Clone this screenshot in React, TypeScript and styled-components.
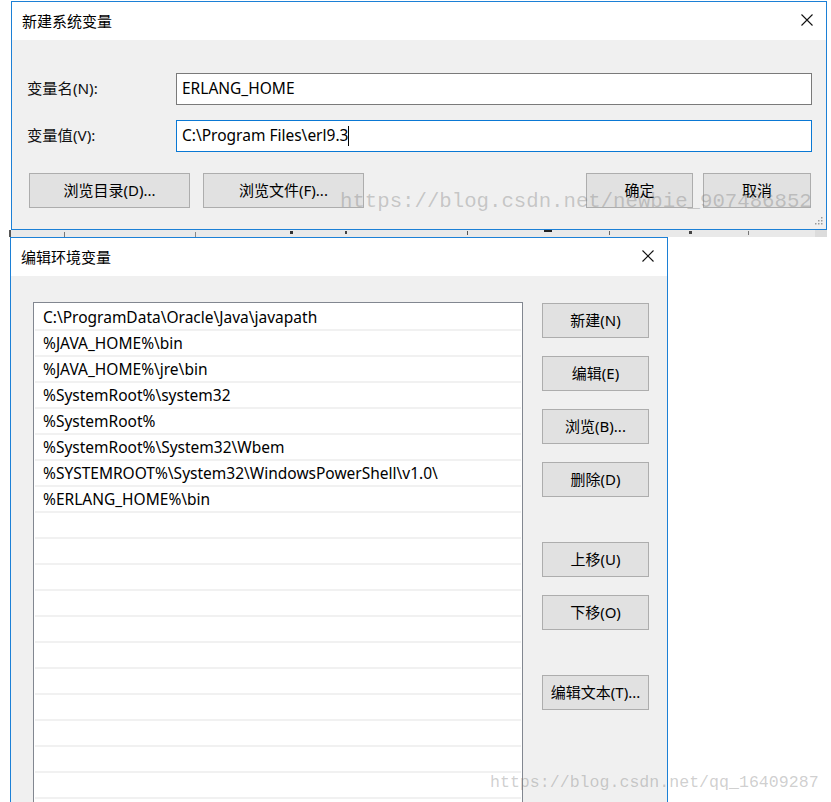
import styled, { createGlobalStyle } from "styled-components";

const GlobalStyle = createGlobalStyle`
  html, body {
    margin: 0;
    padding: 0;
    background: #fff;
    overflow: hidden;
  }
  body {
    font-family: "Noto Sans", "Noto Sans CJK SC", sans-serif;
    font-size: 15px;
    color: #000;
  }
  * {
    box-sizing: border-box;
  }
`;

const paths = [
  "C:\\ProgramData\\Oracle\\Java\\javapath",
  "%JAVA_HOME%\\bin",
  "%JAVA_HOME%\\jre\\bin",
  "%SystemRoot%\\system32",
  "%SystemRoot%",
  "%SystemRoot%\\System32\\Wbem",
  "%SYSTEMROOT%\\System32\\WindowsPowerShell\\v1.0\\",
  "%ERLANG_HOME%\\bin",
];

const CloseIcon = () => (
  <svg width="12" height="12" viewBox="0 0 12 12">
    <path d="M0.5 0.5 L11.5 11.5 M11.5 0.5 L0.5 11.5" stroke="#111" strokeWidth="1.1" fill="none" />
  </svg>
);

const Grip = () => (
  <svg width="10" height="10" viewBox="0 0 10 10">
    <g fill="#9a9a9a">
      <rect x="8" y="1" width="1.5" height="1.5" />
      <rect x="5" y="4" width="1.5" height="1.5" />
      <rect x="8" y="4" width="1.5" height="1.5" />
      <rect x="2" y="7" width="1.5" height="1.5" />
      <rect x="5" y="7" width="1.5" height="1.5" />
      <rect x="8" y="7" width="1.5" height="1.5" />
    </g>
  </svg>
);

// fragment of the window behind, visible between the two dialogs
const BehindStrip = () => (
  <svg width="818" height="7" viewBox="0 0 818 7">
    <rect x="0" y="0" width="818" height="7" fill="#e9e9e9" />
    <rect x="0" y="0" width="2" height="7" fill="#555" />
    <rect x="55" y="2" width="1" height="5" fill="#777" />
    <rect x="186" y="2" width="1" height="5" fill="#888" />
    <rect x="281" y="1" width="3" height="3" fill="#333" />
    <rect x="336" y="1" width="2" height="3" fill="#444" />
    <rect x="458" y="1" width="1" height="4" fill="#555" />
    <rect x="535" y="0" width="8" height="2" fill="#222" />
    <rect x="600" y="1" width="1" height="4" fill="#666" />
    <rect x="680" y="1" width="3" height="3" fill="#444" />
    <rect x="739" y="1" width="1" height="4" fill="#777" />
    <rect x="806" y="0" width="12" height="7" fill="#dcdcdc" />
  </svg>
);

export default function App() {
  return (
    <Page>
      <GlobalStyle />

      <Dialog $left={11} $width={816}>
        <TitleBar>
          <Title>新建系统变量</Title>
          <CloseIcon />
        </TitleBar>
        <VarForm>
          <FieldGrid>
            <Label>变量名(N):</Label>
            <Input>ERLANG_HOME</Input>
            <Label>变量值(V):</Label>
            <Input $focused>
              C:\Program Files\erl9.3
              <Caret />
            </Input>
          </FieldGrid>
          <ButtonRow>
            <ButtonGroup $gap={13}>
              <Button $width={161}>浏览目录(D)...</Button>
              <Button $width={161}>浏览文件(F)...</Button>
            </ButtonGroup>
            <ButtonGroup $gap={10}>
              <Button $width={107}>确定</Button>
              <Button $width={108}>取消</Button>
            </ButtonGroup>
          </ButtonRow>
          <GripSpot>
            <Grip />
          </GripSpot>
        </VarForm>
      </Dialog>

      <StripRow>
        <BehindStrip />
      </StripRow>

      <Dialog $left={10} $width={658}>
        <TitleBar>
          <Title>编辑环境变量</Title>
          <CloseIcon />
        </TitleBar>
        <EditBody>
          <PathList>
            {Array.from({ length: 20 }).map((_, i) => (
              <PathRow key={i}>{paths[i] ?? ""}</PathRow>
            ))}
          </PathList>
          <SideButtons>
            <Button $width={107}>新建(N)</Button>
            <Button $width={107}>编辑(E)</Button>
            <Button $width={107}>浏览(B)...</Button>
            <Button $width={107}>删除(D)</Button>
            <Button $width={107} $spaced>上移(U)</Button>
            <Button $width={107}>下移(O)</Button>
            <Button $width={107} $spaced>编辑文本(T)...</Button>
          </SideButtons>
        </EditBody>
      </Dialog>

      <Watermark $top={192} $left={340} $size={20.7}>
        https://blog.csdn.net/newbie_907486852
      </Watermark>
      <Watermark $top={775} $left={490} $size={16.6}>
        https://blog.csdn.net/qq_16409287
      </Watermark>
    </Page>
  );
}

const Page = styled.div`
  position: relative;
  width: 831px;
  height: 802px;
  overflow: hidden;
  padding-top: 1px;
`;

const Dialog = styled.div<{ $width: number; $left: number }>`
  position: relative;
  margin-left: ${(p) => p.$left}px;
  width: ${(p) => p.$width}px;
  border: 1px solid #1c80d6;
  background: #f0f0f0;
`;

const TitleBar = styled.div`
  height: 38px;
  background: #fff;
  display: flex;
  align-items: center;
  justify-content: space-between;
  padding: 0 13px 2px 10px;
`;

const Title = styled.div`
  font-size: 15px;
  color: #000;
`;

const VarForm = styled.div`
  position: relative;
  padding: 33px 14px 21px 15px;
  display: flex;
  flex-direction: column;
  gap: 21px;
`;

const FieldGrid = styled.div`
  display: grid;
  grid-template-columns: 149px 1fr;
  grid-auto-rows: 32px;
  row-gap: 15px;
  align-items: center;
`;

const Label = styled.div`
  font-size: 15.3px;
  color: #111;
  padding-bottom: 4px;
`;

const Input = styled.div<{ $focused?: boolean }>`
  height: 32px;
  display: flex;
  align-items: center;
  padding: 0 0 3px 5px;
  background: #fff;
  border: 1px solid ${(p) => (p.$focused ? "#0a78d4" : "#7a7a7a")};
  font-size: 15.5px;
  white-space: pre;
`;

const Caret = styled.span`
  display: inline-block;
  width: 1px;
  height: 20px;
  margin-top: 3px;
  background: #000;
`;

const ButtonRow = styled.div`
  display: flex;
  justify-content: space-between;
  padding: 0 1px 0 2px;
`;

const ButtonGroup = styled.div<{ $gap: number }>`
  display: flex;
  gap: ${(p) => p.$gap}px;
`;

const Button = styled.div<{ $width: number; $spaced?: boolean }>`
  width: ${(p) => p.$width}px;
  height: 35px;
  flex: none;
  display: flex;
  align-items: center;
  justify-content: center;
  padding-bottom: 2px;
  background: #e1e1e1;
  border: 1px solid #adadad;
  font-size: 15px;
  color: #000;
  margin-top: ${(p) => (p.$spaced ? 27 : 0)}px;
`;

const GripSpot = styled.div`
  position: absolute;
  right: 3px;
  bottom: 3px;
  line-height: 0;
`;

const StripRow = styled.div`
  margin-left: 9px;
  height: 7px;
  line-height: 0;
`;

const EditBody = styled.div`
  display: flex;
  gap: 19px;
  padding: 26px 18px 0 22px;
  height: 600px;
`;

const PathList = styled.div`
  width: 490px;
  flex: none;
  height: 560px;
  background: #fff;
  border: 1px solid #828790;
  padding: 2px 1px 0 1px;
  overflow: hidden;
`;

const PathRow = styled.div`
  height: 26px;
  display: flex;
  align-items: center;
  padding: 0 0 1px 8px;
  border-bottom: 2px solid #f1f1f1;
  font-size: 15.5px;
  color: #000;
  white-space: pre;
`;

const SideButtons = styled.div`
  display: flex;
  flex-direction: column;
  gap: 18px;
  padding-top: 1px;
`;

const Watermark = styled.div<{ $top: number; $left: number; $size: number }>`
  position: absolute;
  top: ${(p) => p.$top}px;
  left: ${(p) => p.$left}px;
  font-family: "Liberation Mono", monospace;
  font-size: ${(p) => p.$size}px;
  line-height: 1;
  color: rgba(120, 120, 120, 0.36);
  white-space: pre;
  pointer-events: none;
`;
